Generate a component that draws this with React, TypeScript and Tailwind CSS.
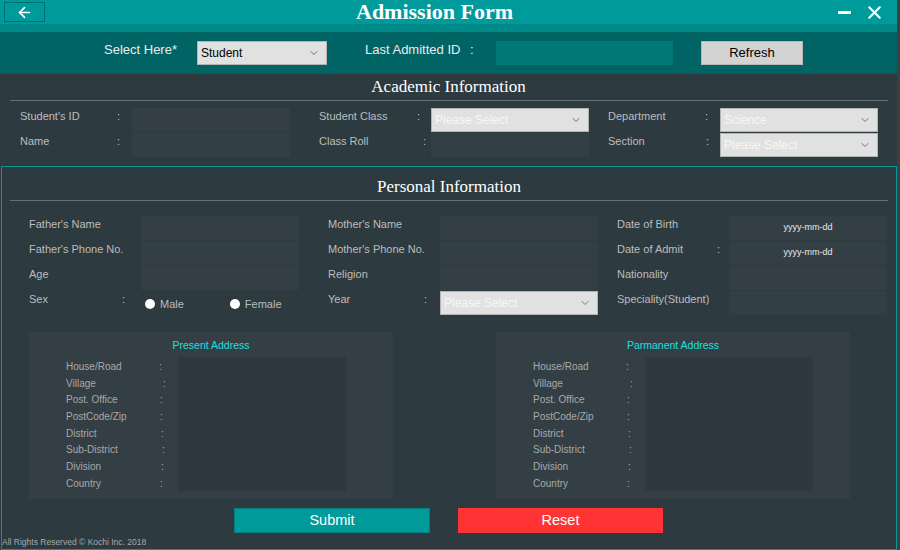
import { ArrowLeft, ChevronDown, X } from "lucide-react";

const sans = "font-['Liberation_Sans',Arial,sans-serif]";
const serif = "font-['Liberation_Serif','Times_New_Roman',serif]";

function Select({ value, className = "", light = false }: { value: string; className?: string; light?: boolean }) {
  return (
    <div
      className={`flex items-center justify-between h-[24px] bg-[#e1e1e1] border border-[#b4b4b4] pl-[3px] pr-[6px] ${className}`}
    >
      <span className={`text-[12px] ${light ? "text-[#f7f7f7]" : "text-black"}`}>{value}</span>
      <ChevronDown size={12} strokeWidth={1.6} className="text-[#555]" />
    </div>
  );
}

function Field({ className = "", children }: { className?: string; children?: React.ReactNode }) {
  return (
    <div className={`h-[24px] w-[158px] bg-[#333f44] flex items-center justify-center text-[9px] text-[#e8e8e8] ${className}`}>
      {children}
    </div>
  );
}

function Label({ text, colon }: { text: string; colon?: string }) {
  return (
    <div className="relative w-[112px] h-[24px] text-[11px] text-[#bdbdbd]">
      {text}
      {colon && <span className={`absolute top-0 ${colon}`}>:</span>}
    </div>
  );
}

function Address({ title, className = "" }: { title: string; className?: string }) {
  const rows = ["House/Road", "Village", "Post. Office", "PostCode/Zip", "District", "Sub-District", "Division", "Country"];
  const colons = ["left-[93px]", "left-[97px]", "left-[94px]", "left-[94px]", "left-[95px]", "left-[96px]", "left-[95px]", "left-[94px]"];
  return (
    <div className={`h-[167px] bg-[#333f44] pt-[6px] ${className}`}>
      <div className="text-center text-[10.5px] text-[#19e0e0] leading-[14px]">{title}</div>
      <div className="flex mt-[5px]">
        <div className="ml-[37px] w-[112px] flex flex-col pt-[2px]">
          {rows.map((r, i) => (
            <div key={r} className="relative h-[16.7px] text-[10px] leading-[16.7px] text-[#a9a9a9]">
              {r}
              <span className={`absolute top-0 ${colons[i]}`}>:</span>
            </div>
          ))}
        </div>
        <div className="w-[168px] h-[134px] bg-[#2d393e]" />
      </div>
    </div>
  );
}

export default function App() {
  return (
    <div className={`w-[900px] h-[550px] bg-[#3b3f41] ${sans}`}>
      <div className="w-[897px] h-[550px] bg-[#2d3a3f] flex flex-col">
        {/* title bar */}
        <div className="h-[24px] bg-[#009a9a] flex items-center">
          <div className="ml-[4px] w-[41px] h-[20px] border border-[#00706f] flex items-center justify-center">
            <ArrowLeft size={17} strokeWidth={2.4} className="text-white" />
          </div>
          <div className={`ml-[311px] text-[22px] font-bold text-white leading-[24px] ${serif}`}>Admission Form</div>
          <div className="flex-1" />
          <div className="w-[13px] h-[3px] bg-white mr-[13px]" />
          <X size={21} strokeWidth={2.4} className="text-white mr-[12px]" />
        </div>
        <div className="h-[8px] bg-[#008989]" />
        {/* top selection band */}
        <div className="h-[42px] bg-[#006464] flex items-start pt-[9px] text-[13px] text-[#ececec]">
          <div className="ml-[104px] w-[93px] -mt-[1px]">Select Here*</div>
          <Select value="Student" className="w-[130px]" />
          <div className="ml-[38px] w-[131px] -mt-[1px]">
            Last Admitted ID <span className="ml-[6px]">:</span>
          </div>
          <div className="w-[177px] h-[24px] bg-[#007878]" />
          <div className="ml-[28px] w-[102px] h-[24px] bg-[#d3d3d3] border border-[#b8b8b8] flex items-center justify-center text-black text-[13px]">
            Refresh
          </div>
        </div>
        {/* academic */}
        <div className="h-[92px] pt-[2px]">
          <div className={`h-[22px] leading-[22px] text-center text-[17px] text-white ${serif}`}>Academic Information</div>
          <div className="mt-[2px] ml-[10px] w-[878px] h-[1px] bg-[#6a6f70]" />
          <div className="mt-[7px] ml-[20px] flex flex-col gap-[1px]">
            <div className="flex">
              <Label text="Student's ID" colon="left-[97px]" />
              <Field />
              <div className="w-[29px]" />
              <Label text="Student Class" colon="left-[98px]" />
              <Select value="Please Select" light className="w-[158px]" />
              <div className="w-[19px]" />
              <Label text="Department" colon="left-[97px]" />
              <Select value="Science" light className="w-[158px]" />
            </div>
            <div className="flex">
              <Label text="Name" colon="left-[97px]" />
              <Field />
              <div className="w-[29px]" />
              <Label text="Class Roll" colon="left-[104px]" />
              <Field />
              <div className="w-[19px]" />
              <Label text="Section" colon="left-[98px]" />
              <Select value="Please Select" light className="w-[158px]" />
            </div>
          </div>
        </div>
        {/* personal */}
        <div className="ml-[1px] flex-1 border border-[#0a9696] pt-[9px]">
          <div className={`h-[22px] leading-[22px] text-center text-[17px] text-white ${serif}`}>Personal Information</div>
          <div className="mt-[2px] ml-[8px] w-[878px] h-[1px] bg-[#6a6f70]" />
          <div className="mt-[15px] ml-[27px] flex flex-col gap-[1px]">
            <div className="flex">
              <Label text="Father's Name" />
              <Field />
              <div className="w-[29px]" />
              <Label text="Mother's Name" />
              <Field />
              <div className="w-[19px]" />
              <Label text="Date of Birth" />
              <Field>yyyy-mm-dd</Field>
            </div>
            <div className="flex">
              <Label text="Father's Phone No." />
              <Field />
              <div className="w-[29px]" />
              <Label text="Mother's Phone No." />
              <Field />
              <div className="w-[19px]" />
              <Label text="Date of Admit" colon="left-[100px]" />
              <Field>yyyy-mm-dd</Field>
            </div>
            <div className="flex">
              <Label text="Age" />
              <Field />
              <div className="w-[29px]" />
              <Label text="Religion" />
              <Field />
              <div className="w-[19px]" />
              <Label text="Nationality" />
              <Field />
            </div>
            <div className="flex">
              <Label text="Sex" colon="left-[93px]" />
              <div className="w-[158px] h-[24px] flex items-center text-[11px] text-[#bdbdbd] pt-[2px]">
                <span className="ml-[4px] w-[10px] h-[10px] rounded-full bg-white" />
                <span className="ml-[5px]">Male</span>
                <span className="ml-[46px] w-[10px] h-[10px] rounded-full bg-white" />
                <span className="ml-[5px]">Female</span>
              </div>
              <div className="w-[29px]" />
              <Label text="Year" colon="left-[96px]" />
              <Select value="Please Select" light className="w-[158px]" />
              <div className="w-[19px]" />
              <Label text="Speciality(Student)" />
              <Field />
            </div>
          </div>
          <div className="mt-[17px] ml-[27px] flex">
            <Address title="Present Address" className="w-[364px]" />
            <Address title="Parmanent Address" className="ml-[103px] w-[354px]" />
          </div>
          <div className="mt-[9px] flex">
            <div className="ml-[232px] w-[196px] h-[25px] bg-[#009a9a] border border-[#007f80] flex items-center justify-center text-[14.5px] text-white">
              Submit
            </div>
            <div className="ml-[28px] w-[205px] h-[25px] bg-[#ff3333] flex items-center justify-center text-[14.5px] text-white">
              Reset
            </div>
          </div>
          <div className="mt-[3px] text-[8.5px] text-[#a7a7a7] leading-[12px]">All Rights Reserved © Kochi Inc. 2018</div>
        </div>
      </div>
    </div>
  );
}
